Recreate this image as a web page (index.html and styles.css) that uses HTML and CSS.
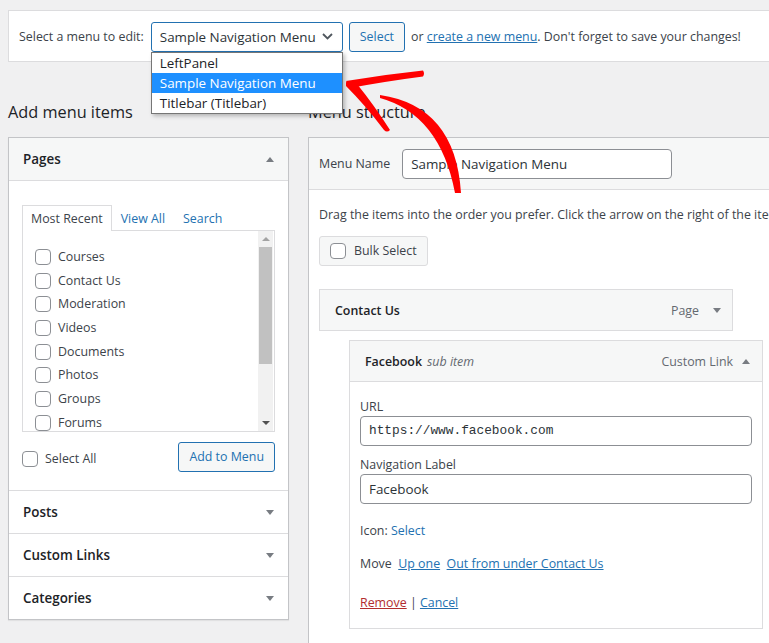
FILE: index.html
```html
<!DOCTYPE html>
<html>
<head>
<meta charset="utf-8">
<link rel="stylesheet" href="styles.css">
</head>
<body>
<div class="page">
  <div class="manage-menus">
    <span class="lbl">Select a menu to edit:</span>
    <div class="select-wrap">
      <div class="select"><span>Sample Navigation Menu</span>
        <svg class="chev" width="11" height="7" viewBox="0 0 11 7"><path d="M1 1 L5.5 5.5 L10 1" fill="none" stroke="#50575e" stroke-width="1.8"/></svg>
      </div>
      <ul class="options">
        <li>LeftPanel</li>
        <li class="sel">Sample Navigation Menu</li>
        <li>Titlebar (Titlebar)</li>
      </ul>
    </div>
    <button class="btn btn-select">Select</button>
    <span class="hint">or <a href="#">create a new menu</a>. Don't forget to save your changes!</span>
  </div>

  <div class="columns">
    <div class="col-left">
      <h2>Add menu items</h2>
      <div class="accordion">
        <div class="sec open">
          <div class="sec-head"><h3>Pages</h3><span class="tri up"></span></div>
          <div class="sec-body">
            <ul class="tabs">
              <li class="active">Most Recent</li>
              <li>View All</li>
              <li>Search</li>
            </ul>
            <div class="panel">
              <ul class="checklist">
                <li><span class="cb"></span>Courses</li>
                <li><span class="cb"></span>Contact Us</li>
                <li><span class="cb"></span>Moderation</li>
                <li><span class="cb"></span>Videos</li>
                <li><span class="cb"></span>Documents</li>
                <li><span class="cb"></span>Photos</li>
                <li><span class="cb"></span>Groups</li>
                <li><span class="cb"></span>Forums</li>
              </ul>
              <div class="scrollbar">
                <div class="sb-btn"><span class="sb-up"></span></div>
                <div class="sb-thumb"></div>
                <div class="sb-track"></div>
                <div class="sb-btn"><span class="sb-down"></span></div>
              </div>
            </div>
            <div class="actions">
              <div class="cb-row"><span class="cb"></span>Select All</div>
              <button class="btn">Add to Menu</button>
            </div>
          </div>
        </div>
        <div class="sec"><div class="sec-head"><h3>Posts</h3><span class="tri down"></span></div></div>
        <div class="sec"><div class="sec-head"><h3>Custom Links</h3><span class="tri down"></span></div></div>
        <div class="sec"><div class="sec-head"><h3>Categories</h3><span class="tri down"></span></div></div>
      </div>
    </div>

    <div class="col-right">
      <h2>Menu structure</h2>
      <div class="menu-box">
        <div class="menu-head">
          <span class="mn-label">Menu Name</span>
          <div class="input name-input">Sample Navigation Menu</div>
        </div>
        <div class="menu-body">
          <p class="drag">Drag the items into the order you prefer. Click the arrow on the right of the item to reveal additional configuration options.</p>
          <div class="bulk-row"><div class="bulk"><span class="cb"></span>Bulk Select</div></div>
          <div class="item">
            <span class="item-title">Contact Us</span>
            <span class="item-type">Page</span>
            <span class="tri down"></span>
          </div>
          <div class="sub">
            <div class="sub-head">
              <span class="item-title">Facebook</span><span class="subtag">sub item</span>
              <span class="item-type type2">Custom Link</span>
              <span class="tri up"></span>
            </div>
            <div class="sub-body">
              <label class="f-label">URL</label>
              <div class="input wide mono">https://www.facebook.com</div>
              <label class="f-label second">Navigation Label</label>
              <div class="input wide">Facebook</div>
              <div class="line icon-line">Icon: <a href="#" class="plain">Select</a></div>
              <div class="line move"><span>Move</span><a href="#">Up one</a><a href="#">Out from under Contact Us</a></div>
              <div class="line actions-line"><a href="#" class="remove">Remove</a> | <a href="#">Cancel</a></div>
            </div>
          </div>
        </div>
      </div>
    </div>
  </div>

  <svg class="annot" width="769" height="643" viewBox="0 0 769 643">
    <path fill="#f00" d="M380,95 Q455.5,106 461,193 L455,193 Q440,114.5 380,98 Z"/>
    <path fill="#f00" d="M346,81 Q385,74.5 423,70.5 Q425,73.5 423,76.5 Q388,81 350,88 Z"/>
    <path fill="#f00" d="M346,82 L357,84 Q374,105 390,130 Q387,133 384,130 Q366,106 346,86 Z"/>
  </svg>
</div>
</body>
</html>
```

FILE: styles.css
```css
* { box-sizing: border-box; }
html, body { margin: 0; padding: 0; }
body {
  background: #f0f0f1;
  font-family: "Open Sans", "Noto Sans", sans-serif;
  font-size: 12.4px;
  line-height: 20px;
  color: #3c434a;
  width: 769px;
  height: 643px;
  overflow: hidden;
}
a { color: #2271b1; }
.page { position: relative; padding: 10px 0 0 8px; height: 643px; }

/* top bar */
.manage-menus {
  display: flex;
  align-items: center;
  width: 800px;
  height: 52px;
  background: #fff;
  border: 1px solid #dcdcde;
  padding-left: 10px;
  padding-top: 1px;
  white-space: nowrap;
}
.lbl { margin-right: 7px; }
.select-wrap { position: relative; }
.select {
  width: 192px;
  height: 30px;
  border: 1px solid #2271b1;
  border-radius: 3px;
  display: flex;
  align-items: center;
  justify-content: space-between;
  padding: 0 9px 0 8px;
  font-size: 13.4px;
  color: #2c3338;
  background: #fff;
}
.options {
  position: absolute;
  left: 0;
  top: 30px;
  width: 192px;
  margin: 0;
  padding: 0;
  list-style: none;
  background: #fff;
  border: 1px solid #767676;
  box-shadow: 2px 2px 4px rgba(0, 0, 0, 0.25);
  z-index: 5;
  font-size: 13.4px;
}
.options li { height: 20px; line-height: 20px; padding-left: 8px; color: #1d2327; }
.options li.sel { background: #1e90ff; color: #fff; }

.btn {
  height: 30px;
  padding: 0 10px;
  border: 1px solid #2271b1;
  border-radius: 3px;
  background: #f6f7f7;
  color: #2271b1;
  font-family: inherit;
  font-size: 12.4px;
  line-height: 28px;
}
.btn-select { margin-left: 6px; }
.hint { margin-left: 6px; }

/* columns */
.columns { display: flex; gap: 19px; }
h2 {
  font-size: 16.3px;
  font-weight: 400;
  color: #1d2327;
  margin: 37px 0 13px;
  line-height: 24px;
  padding-top: 1px;
}
.col-left { width: 281px; flex-shrink: 0; }
.accordion {
  background: #fff;
  border: 1px solid #c3c4c7;
  box-shadow: 0 1px 1px rgba(0, 0, 0, 0.06);
}
.sec + .sec { border-top: 1px solid #dcdcde; }
.sec-head {
  height: 42px;
  display: flex;
  align-items: center;
  justify-content: space-between;
  padding: 0 14px;
}
.sec.open .sec-head { height: 43px; background: #f6f7f7; border-bottom: 1px solid #dcdcde; }
.sec-head h3 { margin: 0; font-size: 13.4px; font-weight: 600; color: #1d2327; }

.tri { width: 0; height: 0; border-left: 4px solid transparent; border-right: 4px solid transparent; }
.tri.up { border-bottom: 5px solid #787c82; }
.tri.down { border-top: 5px solid #787c82; }

.sec-body { padding: 24px 13px 18px; }
.tabs { display: flex; list-style: none; margin: 0; padding: 0; }
.tabs li {
  height: 26px;
  line-height: 24px;
  padding: 1px 8px 0;
  border: 1px solid transparent;
  border-bottom: none;
  color: #2271b1;
  margin-bottom: -1px;
  position: relative;
}
.tabs li.active { border-color: #dcdcde; background: #fff; color: #3c434a; z-index: 1; }

.panel { display: flex; height: 202px; border: 1px solid #dcdcde; }
.checklist { flex: 1; list-style: none; margin: 0; padding: 14px 0 0 12px; overflow: hidden; }
.checklist li { display: flex; align-items: center; height: 23.7px; }
.cb {
  width: 16px;
  height: 16px;
  border: 1px solid #8c8f94;
  border-radius: 4px;
  background: #fff;
  flex-shrink: 0;
  margin-right: 7px;
}
.scrollbar {
  width: 15px;
  margin-right: 1px;
  background: #f1f1f1;
  display: flex;
  flex-direction: column;
  align-items: center;
}
.sb-btn { height: 16px; width: 15px; display: flex; align-items: center; justify-content: center; }
.sb-up { width: 0; height: 0; border-left: 4px solid transparent; border-right: 4px solid transparent; border-bottom: 4px solid #a3a3a3; }
.sb-down { width: 0; height: 0; border-left: 4px solid transparent; border-right: 4px solid transparent; border-top: 4px solid #505050; }
.sb-thumb { width: 13px; height: 117px; background: #c1c1c1; }
.sb-track { flex: 1; }

.actions { display: flex; justify-content: space-between; align-items: center; margin-top: 10px; height: 30px; }
.cb-row { display: flex; align-items: center; padding-top: 4px; }

/* right */
.col-right { width: 480px; flex-shrink: 0; }
.menu-box { border: 1px solid #c3c4c7; background: #fff; height: 540px; }
.menu-head {
  height: 52px;
  background: #f6f7f7;
  border-bottom: 1px solid #dcdcde;
  display: flex;
  align-items: center;
  padding-left: 10px;
}
.mn-label { margin-right: 12px; padding-top: 1px; }
.input {
  height: 30px;
  border: 1px solid #8c8f94;
  border-radius: 4px;
  background: #fff;
  padding: 0 8px;
  line-height: 28px;
  font-size: 13.4px;
  color: #2c3338;
  white-space: nowrap;
}
.name-input { width: 270px; }
.menu-body { padding: 14px 10px 0 10px; }
.drag { margin: 0; line-height: 20px; padding-top: 1px; white-space: nowrap; }
.bulk-row { margin-top: 11px; }
.bulk {
  display: inline-flex;
  align-items: center;
  height: 30px;
  padding: 0 10px;
  border: 1px solid #dcdcde;
  border-radius: 3px;
  background: #f6f7f7;
}
.bulk .cb { margin-right: 8px; }

.item {
  width: 414px;
  height: 42px;
  margin-top: 23px;
  border: 1px solid #dcdcde;
  background: #f6f7f7;
  display: flex;
  align-items: center;
  padding: 1px 11px 0 15px;
}
.item-title { font-weight: 600; color: #1d2327; }
.item .item-title { flex: 1; }
.item-type { color: #646970; margin-right: 14px; }
.sub { width: 414px; margin: 9px 0 0 30px; border: 1px solid #dcdcde; background: #fff; }
.sub-head {
  height: 41px;
  background: #f6f7f7;
  border-bottom: 1px solid #dcdcde;
  display: flex;
  align-items: center;
  padding: 1px 12px 0 15px;
}
.subtag { font-style: italic; color: #646970; margin-left: 5px; flex: 1; }
.type2 { margin-right: 9px; }
.sub-body { padding: 16px 10px 15px; }
.f-label { display: block; line-height: 18px; }
.f-label.second { margin-top: 10px; }
.wide { width: 392px; }
.mono { font-family: "Liberation Mono", "DejaVu Sans Mono", monospace; font-size: 12.8px; }
.line { line-height: 20px; }
.icon-line { margin-top: 17px; }
.plain { text-decoration: none; }
.move { margin-top: 13px; display: flex; gap: 6.5px; }
.actions-line { margin-top: 19px; }
.remove { color: #b32d2e; }

.annot { position: absolute; left: 0; top: 0; z-index: 10; pointer-events: none; }
```
